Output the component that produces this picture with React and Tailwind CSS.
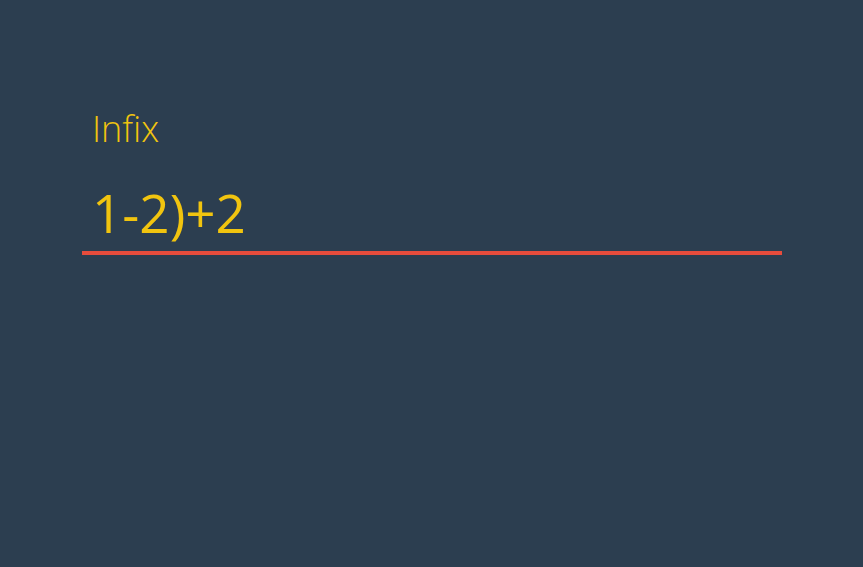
import React, { useState } from "react";

const App = () => {
    const [infix, setInfix] = useState('1-2)+2');

    return (
        <div className="min-h-screen w-full bg-[#2c3e50] pt-[105px] pl-[82px]" style={{ fontFamily: '"Open Sans", sans-serif' }}>
            <div className="w-[700px]">
                <label htmlFor="infix" className="block pl-[10px] text-[36px] font-light leading-[48px] text-[#f1c40f]">Infix</label>
                <input
                    id="infix"
                    value={infix}
                    onChange={(e) => setInfix(e.target.value)}
                    className="mt-[21px] block h-[81px] w-full bg-transparent pl-[10px] text-[53px] leading-[77px] text-[#f1c40f] border-b-4 border-[#e74c3c] outline-none"
                />
            </div>
        </div>
    );
};

export default App;
